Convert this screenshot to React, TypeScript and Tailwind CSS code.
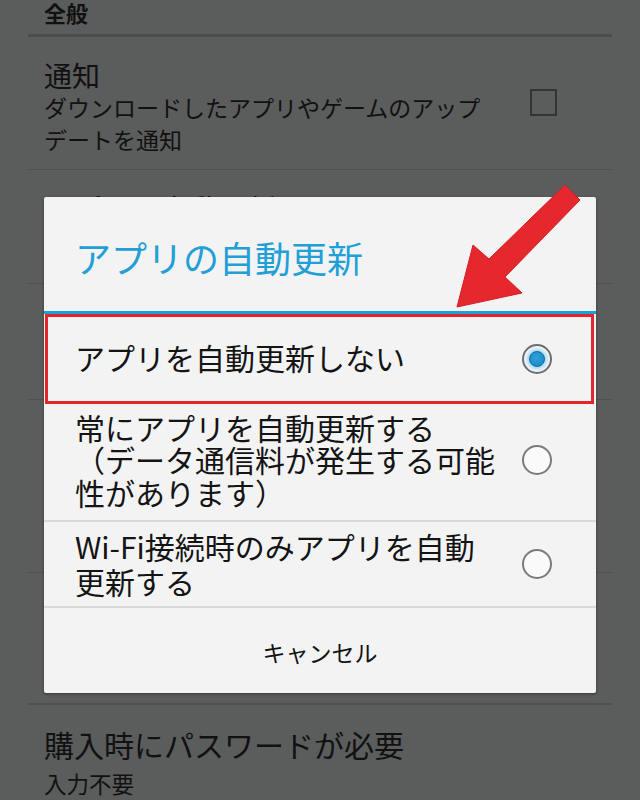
const jp = { fontFamily: '"Noto Sans CJK JP", "Noto Sans", sans-serif' }

function Radio({ checked }: { checked?: boolean }) {
  if (checked) {
    return (
      <div className="flex h-[30px] w-[30px] shrink-0 items-center justify-center rounded-full border-2 border-[#6e6e6e] bg-[radial-gradient(circle,#9fd3ee_40%,#e4f1f8_62%,#f7f7f7_80%)]">
        <div className="h-[16px] w-[16px] rounded-full border border-[#11709f] bg-[radial-gradient(circle_at_45%_40%,#2fa0da,#1786c3)]" />
      </div>
    )
  }
  return <div className="h-[30px] w-[30px] shrink-0 rounded-full border-2 border-[#7a7a7a] bg-[#fafafa]" />
}

function Divider({ thick }: { thick?: boolean }) {
  return <div className={thick ? 'mx-[28px] h-[3px] bg-[#4b4c4c]' : 'mx-[28px] h-px bg-[#505151]'} />
}

export default function App() {
  return (
    <div className="relative h-[800px] w-[640px] overflow-hidden bg-[#5b5c5c] text-[#111]" style={jp}>
      {/* settings list, dimmed behind the dialog */}
      <div className="flex flex-col">
        <div className="mx-[28px] h-[34px] px-[16px] text-[22px] font-bold leading-[24px]">全般</div>
        <Divider thick />
        <div className="mx-[28px] flex h-[132px] items-start justify-between pl-[16px] pr-[55px] pt-[22px]">
          <div className="flex flex-col">
            <div className="text-[28px] leading-[32px]">通知</div>
            <div className="w-[440px] text-[23px] leading-[32px]">
              ダウンロードしたアプリやゲームのアップ
              <br />
              デートを通知
            </div>
          </div>
          <div className="mt-[30px] h-[27px] w-[27px] border-2 border-[#343434]" />
        </div>
        <Divider />
        <div className="mx-[28px] h-[113px] px-[16px] pt-[20px]">
          <div className="text-[29px] leading-[36px]">アプリの自動更新</div>
        </div>
        <Divider />
        <div className="mx-[28px] h-[115px]" />
        <Divider />
        <div className="mx-[28px] h-[172px]" />
        <Divider />
        <div className="mx-[28px] h-[130px]" />
        <div className="mx-[28px] h-[2px] bg-[#4f5050]" />
        <div className="mx-[28px] flex flex-col px-[16px] pt-[21px]">
          <div className="text-[30px] leading-[36px]">購入時にパスワードが必要</div>
          <div className="mt-[6px] text-[22.5px] leading-[30px]">入力不要</div>
        </div>
      </div>

      {/* auto-update dialog */}
      <div className="absolute left-[44px] top-[197px] flex w-[552px] flex-col rounded-[2px] bg-[#f3f3f3] shadow-[0_1px_3px_rgba(0,0,0,0.4)]">
        <div className="flex h-[114px] items-center pl-[31px] pt-[6px] text-[36px] leading-[40px] text-[#229fd6]">
          アプリの自動更新
        </div>
        <div className="h-[3px] bg-[#1ba0d8]" />
        <div className="ml-[1px] mr-[2px] flex h-[90px] items-center justify-between border-[3px] border-[#e2262b] pl-[27px] pr-[39px] text-[30px] leading-[33px] text-[#141414]">
          <span className="pb-[3px]">アプリを自動更新しない</span>
          <Radio checked />
        </div>
        <div className="flex h-[116px] items-center justify-between pb-[5px] pl-[31px] pr-[44px] text-[30px] leading-[32.5px] text-[#141414]">
          <span>
            常にアプリを自動更新する
            <br />
            （データ通信料が発生する可能
            <br />
            性があります）
          </span>
          <Radio />
        </div>
        <div className="h-[2px] bg-[#d9d9d9]" />
        <div className="flex h-[84px] items-center justify-between pl-[31px] pr-[44px] text-[30px] leading-[35px] text-[#141414]">
          <span>
            Wi-Fi接続時のみアプリを自動
            <br />
            更新する
          </span>
          <Radio />
        </div>
        <div className="h-[2px] bg-[#d9d9d9]" />
        <div className="flex h-[85px] items-center justify-center pt-[2px] text-[23px] leading-[28px] text-[#141414]">
          キャンセル
        </div>
      </div>

      {/* red pointer arrow */}
      <svg className="pointer-events-none absolute left-0 top-0" width="640" height="800" viewBox="0 0 640 800">
        <polygon
          points="565,185 580,200 505,277 522,293 457,307 473,245 489,259"
          fill="#e4282d"
          stroke="#d01f25"
          strokeWidth="1"
          strokeLinejoin="miter"
        />
      </svg>
    </div>
  )
}
